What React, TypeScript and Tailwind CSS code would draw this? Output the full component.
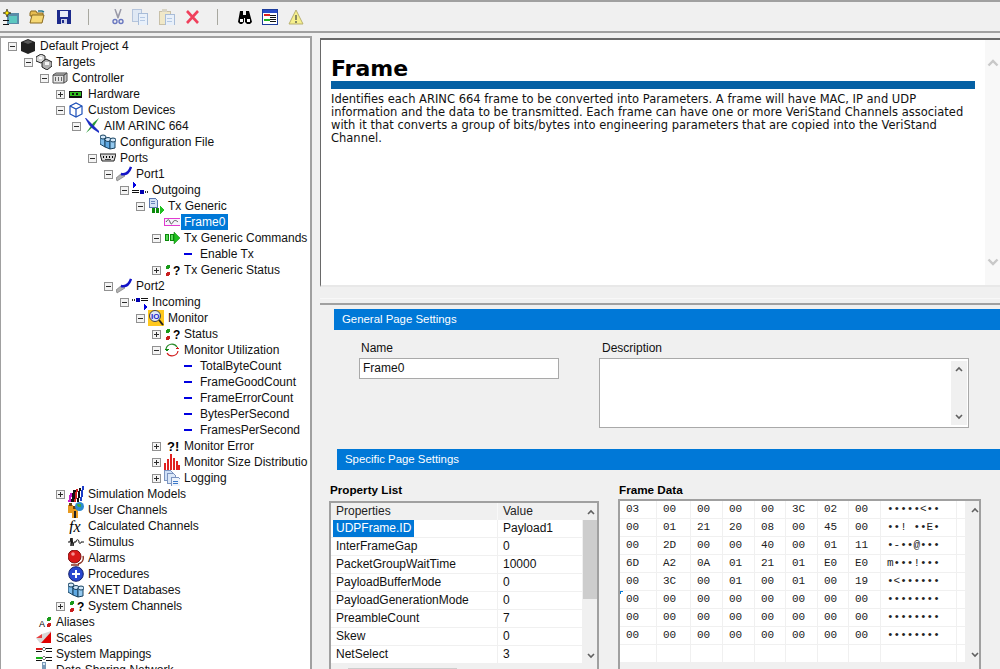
import React from "react";

const Svg = ({ children, size = 16 }: { children: React.ReactNode; size?: number }) => (
    <svg width={size} height={size} viewBox="0 0 16 16" className="shrink-0" shapeRendering="crispEdges">
        {children}
    </svg>
);

const Dash = () => (
    <Svg>
        <rect x="4" y="7" width="8" height="2" fill="#0000e0" />
    </Svg>
);

const Status = () => (
    <Svg>
        <rect x="2" y="3" width="4" height="4" rx="2" fill="#1a9a1a" />
        <rect x="2" y="10" width="4" height="4" rx="2" fill="#c81e1e" />
        <text x="9" y="13" fontSize="12" fontWeight="700" fontFamily="Liberation Sans" fill="#000">?</text>
    </Svg>
);

const Db = () => (
    <Svg>
        <g stroke="#16405f" shapeRendering="auto">
            <path d="M0 2v8l5 3V5z" fill="#7fbcea" />
            <ellipse cx="3" cy="3" rx="3" ry="2" fill="#d4e9fa" />
            <path d="M5 5v8l5 2V7z" fill="#5ea8e2" />
            <ellipse cx="8" cy="5.5" rx="3" ry="2" fill="#d4e9fa" />
            <path d="M10 6v9l5-1V6z" fill="#93c9f0" />
            <ellipse cx="13" cy="6" rx="3" ry="2" fill="#d4e9fa" />
        </g>
    </Svg>
);

const icons: Record<string, React.ReactNode> = {
    project: (
        <Svg>
            <path d="M1 4l7-3 7 3v9l-7 3-7-3z" fill="#222" shapeRendering="auto" />
            <path d="M3 4l5-2 5 2-5 2z" fill="#5c5c5c" shapeRendering="auto" />
        </Svg>
    ),
    targets: (
        <Svg>
            <g shapeRendering="auto" stroke="#222" fill="#d8d8d8">
                <path d="M0 3l5-3 4 2v4l-4 3-5-2z" />
                <path d="M6 8l4-3 6 3v4l-5 4-5-3z" fill="#b0b0b0" />
            </g>
            <rect x="3" y="3" width="3" height="2" fill="#fff" />
            <rect x="9" y="8" width="4" height="3" fill="#f4f4f4" />
        </Svg>
    ),
    controller: (
        <Svg>
            <path d="M1 5h11v8H1z" fill="#e4e4e4" stroke="#555" shapeRendering="auto" />
            <path d="M1 5l3-2h11l-3 2zM12 5l3-2v8l-3 2z" fill="#c8c8c8" stroke="#555" shapeRendering="auto" />
            <rect x="3" y="7" width="1" height="4" fill="#666" />
            <rect x="6" y="7" width="1" height="4" fill="#666" />
            <rect x="9" y="7" width="1" height="4" fill="#666" />
        </Svg>
    ),
    hardware: (
        <Svg>
            <rect x="1" y="5" width="13" height="7" fill="#111" />
            <rect x="2" y="6" width="11" height="4" fill="#30c020" />
            <rect x="4" y="7" width="2" height="2" fill="#111" />
            <rect x="8" y="7" width="2" height="2" fill="#111" />
        </Svg>
    ),
    custom: (
        <Svg>
            <g fill="#fff" stroke="#1c4fb8" shapeRendering="auto" strokeWidth="1.2">
                <path d="M2 4l6-3 6 3v8l-6 3-6-3z" />
                <path d="M2 4l6 3 6-3M8 7v8" fill="none" />
            </g>
        </Svg>
    ),
    aim: (
        <Svg>
            <g shapeRendering="auto">
                <path d="M15 0L9 5 2 15l8-7 5-8z" fill="#2a9a3a" />
                <path d="M1 0l1 0 5 5 3 3 5 5v2l-6-4-3-3-1-1z" fill="#1c2ec4" />
            </g>
        </Svg>
    ),
    ports: (
        <Svg>
            <path d="M0 4h16l-2 7H2z" fill="#d8d8d8" stroke="#222" shapeRendering="auto" />
            <rect x="3" y="6" width="1" height="2" fill="#000" />
            <rect x="6" y="6" width="1" height="2" fill="#000" />
            <rect x="9" y="6" width="1" height="2" fill="#000" />
            <rect x="12" y="6" width="1" height="2" fill="#000" />
            <rect x="5" y="9" width="6" height="1" fill="#444" />
        </Svg>
    ),
    port: (
        <Svg>
            <g shapeRendering="auto">
                <path d="M1 15l-1-3 6-5 3 3z" fill="#b0b0b0" stroke="#707070" strokeWidth=".6" />
                <path d="M5 8c4 1 8-1 10-7" fill="none" stroke="#1414c8" strokeWidth="2.4" />
            </g>
        </Svg>
    ),
    outgoing: (
        <Svg>
            <path d="M1 0l4 3-4 3z" fill="#0000e0" />
            <rect x="0" y="8" width="7" height="1" fill="#111" />
            <rect x="0" y="10" width="7" height="1" fill="#111" />
            <rect x="8" y="8" width="4" height="4" fill="#0000b0" />
            <rect x="13" y="9" width="1" height="2" fill="#333" />
            <rect x="15" y="9" width="1" height="2" fill="#333" />
        </Svg>
    ),
    incoming: (
        <Svg>
            <rect x="0" y="5" width="1" height="2" fill="#333" />
            <rect x="2" y="5" width="1" height="2" fill="#333" />
            <rect x="4" y="4" width="4" height="4" fill="#0000b0" />
            <rect x="9" y="4" width="7" height="1" fill="#111" />
            <rect x="9" y="6" width="7" height="1" fill="#111" />
            <path d="M12 10l3 3-3 3z" fill="#0000e0" />
        </Svg>
    ),
    txgeneric: (
        <Svg>
            <path d="M1 0h6l2 2v7H1z" fill="#d4e2f6" stroke="#5c78b0" strokeWidth="1" />
            <rect x="3" y="3" width="4" height="1" fill="#6a86bc" />
            <rect x="3" y="5" width="4" height="1" fill="#6a86bc" />
            <rect x="4" y="10" width="3" height="5" fill="#0a8a0a" />
            <rect x="8" y="10" width="3" height="5" fill="#0a8a0a" />
            <path d="M12 8l4 4-4 4z" fill="#1fc01f" />
        </Svg>
    ),
    frame: (
        <Svg>
            <rect x="0" y="4" width="16" height="7" fill="#f6f4fc" stroke="#e23ad0" />
            <path d="M2 8c2-3 3-3 4 0s2 2 3 0 3-2 5 0" fill="none" stroke="#555" shapeRendering="auto" />
        </Svg>
    ),
    commands: (
        <Svg>
            <rect x="1" y="4" width="4" height="7" fill="#0a8a0a" />
            <rect x="6" y="4" width="4" height="7" fill="#0a8a0a" />
            <rect x="2" y="5" width="2" height="5" fill="#5ada5a" />
            <rect x="7" y="5" width="2" height="5" fill="#5ada5a" />
            <path d="M10 2l6 6-6 6z" fill="#1fc01f" stroke="#0a7a0a" strokeWidth=".5" shapeRendering="auto" />
        </Svg>
    ),
    monitor: (
        <Svg>
            <rect x="0" y="0" width="16" height="16" rx="1" fill="#ffc81e" />
            <circle cx="7" cy="6" r="5.5" fill="#dfe8f8" stroke="#444" shapeRendering="auto" />
            <path d="M11 10l4 5" stroke="#222" strokeWidth="2" shapeRendering="auto" />
            <text x="3" y="9" fontSize="8" fontWeight="700" fontFamily="Liberation Sans" fill="#1c1cc8">IO</text>
        </Svg>
    ),
    util: (
        <Svg>
            <g fill="none" strokeWidth="1.2" shapeRendering="auto">
                <path d="M2 7a6 6 0 0 1 11-2" stroke="#2a8a2a" />
                <path d="M14 9a6 6 0 0 1-11 2" stroke="#d01818" />
            </g>
            <path d="M0 7h5l-2 2z" fill="#0a8a0a" />
            <path d="M11 7h5l-3-2z" fill="#d01818" />
        </Svg>
    ),
    error: (
        <Svg>
            <text x="3" y="13" fontSize="13" fontWeight="700" fontFamily="Liberation Sans" fill="#000">?!</text>
        </Svg>
    ),
    dist: (
        <Svg>
            <rect x="0" y="9" width="2" height="7" fill="#e02020" />
            <rect x="3" y="5" width="2" height="11" fill="#e02020" />
            <rect x="6" y="0" width="2" height="16" fill="#e02020" />
            <rect x="9" y="4" width="2" height="12" fill="#e02020" />
            <rect x="12" y="7" width="2" height="9" fill="#e02020" />
            <rect x="14" y="11" width="2" height="5" fill="#e02020" />
        </Svg>
    ),
    logging: (
        <Svg>
            <path d="M0 0h6l2 2v8H0z" fill="#cfe0f6" stroke="#7c94c0" />
            <path d="M3 3h6l2 2v8H3z" fill="#dbe8f8" stroke="#7c94c0" />
            <path d="M7 7h7l2 2v7H7z" fill="#eef4fc" stroke="#7c94c0" />
            <rect x="9" y="11" width="5" height="1" fill="#3a78c8" />
            <rect x="9" y="13" width="5" height="1" fill="#3a78c8" />
        </Svg>
    ),
    sim: (
        <Svg>
            <path d="M0 16l2-9h2l-1 9z" fill="#c81ec8" />
            <path d="M3 16l2-12h3l-2 12z" fill="#111" />
            <path d="M6 16l2-13h2l-2 13z" fill="#d02020" />
            <path d="M9 16l2-14h2l-2 14z" fill="#111" />
            <path d="M12 15l2-15h2l-2 15z" fill="#1c3cc8" />
        </Svg>
    ),
    user: (
        <Svg>
            <rect x="0" y="3" width="5" height="8" fill="#e89a20" />
            <rect x="4" y="6" width="6" height="10" fill="#e89a20" />
            <rect x="1" y="1" width="3" height="3" fill="#6a4010" />
            <rect x="5" y="4" width="3" height="3" fill="#6a4010" />
            <rect x="6" y="9" width="2" height="7" fill="#222" />
            <circle cx="11.5" cy="4.5" r="4.5" fill="#2a8ad0" shapeRendering="auto" />
            <path d="M9 2h4v3h-3z" fill="#3aa84a" />
        </Svg>
    ),
    fx: (
        <Svg>
            <text x="1" y="14" fontSize="16" fontStyle="italic" fontFamily="Liberation Serif" fill="#000">fx</text>
        </Svg>
    ),
    stimulus: (
        <Svg>
            <path d="M0 8h2l1-4v8l1-8 1 8 1-4h2c0-3 3-3 3 0 0 2 2 2 2 0h3" fill="none" stroke="#111" shapeRendering="auto" />
        </Svg>
    ),
    alarm: (
        <Svg>
            <circle cx="6.5" cy="6.5" r="6.5" fill="#d81818" stroke="#801010" shapeRendering="auto" />
            <circle cx="5" cy="4" r="1.8" fill="#f89090" shapeRendering="auto" />
            <path d="M3 15h8M10 14c4-1 6-4 5-8" fill="none" stroke="#8a3020" strokeWidth="1.4" shapeRendering="auto" />
        </Svg>
    ),
    procedures: (
        <Svg>
            <circle cx="8" cy="8" r="7.3" fill="#2a48d0" stroke="#12206a" shapeRendering="auto" />
            <rect x="7" y="4" width="2" height="8" fill="#fff" />
            <rect x="4" y="7" width="8" height="2" fill="#fff" />
        </Svg>
    ),
    aliases: (
        <Svg>
            <text x="3" y="13" fontSize="9" fontFamily="Liberation Sans" fill="#000">A</text>
            <rect x="11" y="3" width="4" height="4" rx="2" fill="#1a9a1a" />
            <rect x="11" y="9" width="4" height="4" rx="2" fill="#c81e1e" />
        </Svg>
    ),
    scales: (
        <Svg>
            <path d="M0 8l6-4v4z" fill="#e84040" shapeRendering="auto" />
            <path d="M0 8h6V4l9-3v12H4z" fill="#d8d8d8" shapeRendering="auto" />
            <path d="M5 13L15 2v11z" fill="#e00000" shapeRendering="auto" />
        </Svg>
    ),
    mappings: (
        <Svg>
            <rect x="0" y="2" width="6" height="2" fill="#e01818" />
            <rect x="0" y="5" width="6" height="1" fill="#111" />
            <rect x="0" y="11" width="6" height="2" fill="#18b018" />
            <rect x="0" y="14" width="6" height="1" fill="#111" />
            <path d="M8 1l2 2-2 2-2-2zM8 10l2 2-2 2-2-2z" fill="#fff" stroke="#333" strokeWidth=".7" shapeRendering="auto" />
            <rect x="10" y="2" width="6" height="1" fill="#111" />
            <rect x="10" y="5" width="6" height="1" fill="#111" />
            <rect x="10" y="11" width="6" height="1" fill="#111" />
            <rect x="10" y="14" width="6" height="1" fill="#111" />
        </Svg>
    ),
    network: (
        <Svg>
            <rect x="6" y="0" width="4" height="10" fill="#7a9ab8" />
            <rect x="7" y="1" width="2" height="2" fill="#d8e8f4" />
        </Svg>
    ),
    dash: <Dash />,
    status: <Status />,
    db: <Db />,
};

type Row = [number, string, string, ("+" | "-")?];

const rows: Row[] = [
    [0, "project", "Default Project 4", "-"],
    [1, "targets", "Targets", "-"],
    [2, "controller", "Controller", "-"],
    [3, "hardware", "Hardware", "+"],
    [3, "custom", "Custom Devices", "-"],
    [4, "aim", "AIM ARINC 664", "-"],
    [5, "db", "Configuration File"],
    [5, "ports", "Ports", "-"],
    [6, "port", "Port1", "-"],
    [7, "outgoing", "Outgoing", "-"],
    [8, "txgeneric", "Tx Generic", "-"],
    [9, "frame", "Frame0"],
    [9, "commands", "Tx Generic Commands", "-"],
    [10, "dash", "Enable Tx"],
    [9, "status", "Tx Generic Status", "+"],
    [6, "port", "Port2", "-"],
    [7, "incoming", "Incoming", "-"],
    [8, "monitor", "Monitor", "-"],
    [9, "status", "Status", "+"],
    [9, "util", "Monitor Utilization", "-"],
    [10, "dash", "TotalByteCount"],
    [10, "dash", "FrameGoodCount"],
    [10, "dash", "FrameErrorCount"],
    [10, "dash", "BytesPerSecond"],
    [10, "dash", "FramesPerSecond"],
    [9, "error", "Monitor Error", "+"],
    [9, "dist", "Monitor Size Distribution", "+"],
    [9, "logging", "Logging", "+"],
    [3, "sim", "Simulation Models", "+"],
    [3, "user", "User Channels"],
    [3, "fx", "Calculated Channels"],
    [3, "stimulus", "Stimulus"],
    [3, "alarm", "Alarms"],
    [3, "procedures", "Procedures"],
    [3, "db", "XNET Databases"],
    [3, "status", "System Channels", "+"],
    [1, "aliases", "Aliases"],
    [1, "scales", "Scales"],
    [1, "mappings", "System Mappings"],
    [1, "network", "Data Sharing Network"],
];

const props = [
    ["UDPFrame.ID", "Payload1"],
    ["InterFrameGap", "0"],
    ["PacketGroupWaitTime", "10000"],
    ["PayloadBufferMode", "0"],
    ["PayloadGenerationMode", "0"],
    ["PreambleCount", "7"],
    ["Skew", "0"],
    ["NetSelect", "3"],
];

const frameData = [
    ["03", "00", "00", "00", "00", "3C", "02", "00", "•••••<••"],
    ["00", "01", "21", "20", "08", "00", "45", "00", "••! ••E•"],
    ["00", "2D", "00", "00", "40", "00", "01", "11", "•-••@•••"],
    ["6D", "A2", "0A", "01", "21", "01", "E0", "E0", "m•••!•••"],
    ["00", "3C", "00", "01", "00", "01", "00", "19", "•<••••••"],
    ["00", "00", "00", "00", "00", "00", "00", "00", "••••••••"],
    ["00", "00", "00", "00", "00", "00", "00", "00", "••••••••"],
    ["00", "00", "00", "00", "00", "00", "00", "00", "••••••••"],
    ["", "", "", "", "", "", "", "", ""],
];

function Expander({ kind }: { kind?: "+" | "-" }) {
    if (!kind) return <span className="w-[9px] h-[9px] shrink-0" />;
    return (
        <span className="relative w-[9px] h-[9px] shrink-0 border border-[#919191] bg-[#f4f4f4]">
            <span className="absolute left-[1px] top-[3px] w-[5px] h-[1px] bg-[#2b2b2b]" />
            {kind === "+" && <span className="absolute left-[3px] top-[1px] w-[1px] h-[5px] bg-[#2b2b2b]" />}
        </span>
    );
}

function Chevron({ up, color = "#606060", size = 8 }: { up?: boolean; color?: string; size?: number }) {
    return (
        <svg width={size} height={(size * 3) / 4} viewBox="0 0 8 6" className="shrink-0">
            <path d={up ? "M1 5l3-3 3 3" : "M1 1l3 3 3-3"} fill="none" stroke={color} strokeWidth="1.6" />
        </svg>
    );
}

function Toolbar() {
    return (
        <div className="h-[33px] shrink-0 border-t-2 border-b-2 border-[#a0a0a0] flex items-center">
            <span className="ml-[3px] w-4 h-4">
                <Svg>
                    <rect x="4" y="4" width="12" height="11" fill="#5a8ca8" />
                    <rect x="6" y="7" width="8" height="7" fill="#5cc8c0" />
                    <path d="M4 0l1 3 3 1-3 1-1 3-1-3-3-1 3-1z" fill="#ffe800" stroke="#111" strokeWidth=".6" shapeRendering="auto" />
                    <path d="M0 11h6M0 15h6" stroke="#111" />
                </Svg>
            </span>
            <span className="ml-[10px] w-4 h-4">
                <Svg>
                    <path d="M1 4l1-2h5l1 2h6v3H1z" fill="#e6bc50" stroke="#8a6a20" shapeRendering="auto" />
                    <path d="M1 14l2-8h12l-2 8z" fill="#f6d874" stroke="#8a6a20" shapeRendering="auto" />
                    <path d="M9 2h4l2 1" fill="none" stroke="#2a7a90" strokeWidth="1.5" shapeRendering="auto" />
                </Svg>
            </span>
            <span className="ml-[11px] w-4 h-4">
                <Svg>
                    <rect x="1" y="1" width="14" height="14" fill="#1c2a8c" />
                    <rect x="4" y="2" width="8" height="6" fill="#e8ecf8" />
                    <rect x="5" y="10" width="6" height="5" fill="#d0d4e8" />
                    <rect x="6" y="11" width="2" height="3" fill="#1c2a8c" />
                </Svg>
            </span>
            <span className="ml-[16px] w-[1px] h-[16px] bg-[#a8a8a0]" />
            <span className="ml-[21px] w-4 h-4">
                <Svg>
                    <path d="M5 0l3 8 3-8M11 0L8 9M5 0l3 9" fill="none" stroke="#9a9aa8" strokeWidth="1.4" shapeRendering="auto" />
                    <circle cx="5" cy="12.5" r="2" fill="none" stroke="#6a78c0" strokeWidth="1.4" shapeRendering="auto" />
                    <circle cx="11" cy="12.5" r="2" fill="none" stroke="#6a78c0" strokeWidth="1.4" shapeRendering="auto" />
                </Svg>
            </span>
            <span className="ml-[6px] w-4 h-4">
                <Svg>
                    <rect x="0" y="0" width="9" height="12" fill="#dfe8f4" stroke="#b4c4dc" />
                    <rect x="6" y="4" width="9" height="12" fill="#e8f0fa" stroke="#a8bcd8" />
                    <rect x="8" y="8" width="5" height="1" fill="#b4c8e4" />
                    <rect x="8" y="11" width="5" height="1" fill="#b4c8e4" />
                </Svg>
            </span>
            <span className="ml-[11px] w-4 h-4">
                <Svg>
                    <rect x="0" y="2" width="11" height="13" fill="#f0e8c8" stroke="#c8c0a8" />
                    <rect x="3" y="0" width="5" height="3" fill="#d8d4c4" />
                    <rect x="6" y="5" width="9" height="11" fill="#e8f0fa" stroke="#a8bcd8" />
                    <rect x="8" y="9" width="5" height="1" fill="#b4c8e4" />
                    <rect x="8" y="12" width="5" height="1" fill="#b4c8e4" />
                </Svg>
            </span>
            <span className="ml-[10px] w-4 h-4">
                <Svg>
                    <path d="M2 2l11 12M13 2L2 14" stroke="#f0405c" strokeWidth="2.6" shapeRendering="auto" />
                </Svg>
            </span>
            <span className="ml-[16px] w-[1px] h-[16px] bg-[#a8a8a0]" />
            <span className="ml-[19px] w-4 h-4">
                <Svg>
                    <path d="M3 2h3v4h3V2h3l3 11-2 2h-3l-2-2V9h-1v4l-2 2H3l-2-2z" fill="#000" shapeRendering="auto" />
                    <rect x="3" y="10" width="3" height="3" fill="#fff" />
                    <rect x="10" y="10" width="3" height="3" fill="#fff" />
                </Svg>
            </span>
            <span className="ml-[9px] w-4 h-4">
                <Svg>
                    <rect x="0" y="0" width="15" height="15" fill="#fff" stroke="#1c3c9c" />
                    <rect x="1" y="1" width="14" height="3" fill="#2a4cc8" />
                    <rect x="2" y="5" width="6" height="2" fill="#e02020" />
                    <rect x="2" y="10" width="6" height="2" fill="#20b020" />
                    <path d="M8 6h6M8 8h6M8 10h6M8 12h6" stroke="#111" />
                </Svg>
            </span>
            <span className="ml-[10px] w-4 h-4">
                <Svg>
                    <path d="M8 1l7 14H1z" fill="#f6f08c" stroke="#b8b070" shapeRendering="auto" />
                    <rect x="7" y="6" width="2" height="5" fill="#8a8a60" />
                    <rect x="7" y="12" width="2" height="2" fill="#8a8a60" />
                </Svg>
            </span>
        </div>
    );
}

function Tree() {
    return (
        <div className="w-[312px] h-full shrink-0 overflow-hidden bg-white border-t-2 border-l border-r-2 border-[#a0a0a0]">
            {rows.map(([level, icon, label, kind]) => (
                <div
                    key={label + level}
                    className="h-4 w-[307px] overflow-hidden flex items-center whitespace-nowrap"
                    style={{ paddingLeft: 7 + 16 * level }}
                >
                    <Expander kind={kind} />
                    <span className="ml-[3px] mr-[1px]">{icons[icon]}</span>
                    <span
                        className={
                            label === "Frame0"
                                ? "px-[3px] h-4 leading-4 bg-[#0078d7] text-white"
                                : "px-[3px] h-4 leading-4 text-[#111]"
                        }
                    >
                        {label}
                    </span>
                </div>
            ))}
        </div>
    );
}

function SectionHeader({ title, className }: { title: string; className: string }) {
    return (
        <div className={"h-[21px] bg-[#0078d7] text-white text-[11.4px] flex items-center pl-[8px] shrink-0 " + className}>
            {title}
        </div>
    );
}

function PropertyList() {
    return (
        <div className="w-[270px] ml-[9px] shrink-0">
            <div className="h-[14px] leading-[14px] font-bold ml-[1px] mt-[13px] text-[11.7px] text-black">Property List</div>
            <div className="mt-[4px] h-[200px] border-2 border-[#a0a0a0] bg-[#f0f0f0] flex overflow-hidden">
                <div className="w-[251px] shrink-0">
                    <div className="h-[17px] flex text-[#222] leading-[17px]">
                        <div className="w-[167px] pl-[5px] border-r border-[#f8f8f8]">Properties</div>
                        <div className="pl-[5px]">Value</div>
                    </div>
                    {props.map(([name, value], i) => (
                        <div key={name} className="h-[18px] flex bg-white border-b border-[#f0f0f0] leading-[17px] text-[#111]">
                            <div className="w-[167px] border-r border-[#f0f0f0] pl-[2px]">
                                <span className={i === 0 ? "inline-block px-[3px] bg-[#0078d7] text-white" : "inline-block px-[3px]"}>
                                    {name}
                                </span>
                            </div>
                            <div className="pl-[5px]">{value}</div>
                        </div>
                    ))}
                    <div className="mt-[4px] h-[8px] bg-[#f0f0f0] pl-[17px]">
                        <div className="w-[109px] h-full bg-[#cdcdcd]" />
                    </div>
                </div>
                <div className="w-[15px] shrink-0 flex flex-col items-center ml-[1px]">
                    <div className="h-[17px] flex items-center">
                        <Chevron up />
                    </div>
                    <div className="w-full h-[79px] bg-[#cdcdcd]" />
                    <div className="h-[54px]" />
                    <Chevron />
                </div>
            </div>
        </div>
    );
}

function FrameData() {
    return (
        <div className="w-[363px] ml-[19px] shrink-0">
            <div className="h-[14px] leading-[14px] font-bold ml-[1px] mt-[13px] text-[11.7px] text-black">Frame Data</div>
            <div className="relative mt-[2px] h-[200px] border-2 border-[#a0a0a0] bg-[#f0f0f0] flex overflow-hidden">
                <div className="w-[345px] shrink-0">
                    <div className="grid grid-cols-[37px_34px_32px_32px_31px_32px_31px_32px_76px_8px] bg-white font-['Liberation_Mono',monospace] text-[11px] text-[#222]">
                        {frameData.flatMap((row, r) =>
                            [...row, ""].map((cell, c) => (
                                <div
                                    key={r + "-" + c}
                                    className={
                                        (c === 9 ? "border-b " : "border-r border-b ") +
                                        "border-[#f0f0f0] h-[18px] leading-[17px] whitespace-pre pl-[6px]"
                                    }
                                >
                                    {cell}
                                </div>
                            ))
                        )}
                    </div>
                </div>
                <div className="w-[15px] shrink-0 ml-[2px] flex flex-col items-center bg-[#f0f0f0]">
                    <div className="h-[18px] flex items-center">
                        <Chevron up />
                    </div>
                    <div className="h-[133px]" />
                    <Chevron />
                </div>
                {/* little blue corner the original paints on row 6 */}
                <span className="absolute left-[0px] top-[90px] w-[3px] h-[3px] border-l border-t border-[#0078d7]" />
            </div>
        </div>
    );
}

function RightSide() {
    return (
        <div className="flex-1 min-w-0 ml-[8px] flex flex-col">
            <div className="mt-[2px] h-[249px] shrink-0 bg-white border-t-2 border-l border-b-2 border-t-[#696969] border-l-[#696969] border-b-[#e8e8e8] flex">
                <div className="flex-1 min-w-0 pl-[10px] pr-[10px] pt-[17px] font-['DejaVu_Sans',sans-serif] text-[11.5px] leading-[13px] text-[#111] whitespace-nowrap">
                    <div className="text-[22px] leading-[24px] font-bold text-black">Frame</div>
                    <div className="h-[8px] bg-[#0560a4]" />
                    <p className="mt-[4px]">
                        Identifies each ARINC 664 frame to be converted into Parameters. A frame will have MAC, IP and UDP
                        <br />
                        information and the data to be transmitted. Each frame can have one or more VeriStand Channels associated
                        <br />
                        with it that converts a group of bits/bytes into engineering parameters that are copied into the VeriStand
                        <br />
                        Channel.
                    </p>
                </div>
                <div className="w-[15px] shrink-0 bg-[#f8f8f8] flex flex-col items-center justify-between py-[18px]">
                    <Chevron up color="#c8c8c8" size={12} />
                    <Chevron color="#c8c8c8" size={12} />
                </div>
            </div>
            <div className="h-[12px] shrink-0 border-b border-[#f8f8f8]" />
            <div className="h-[6px] shrink-0 border-b-2 border-[#a0a0a0]" />
            <SectionHeader title="General Page Settings" className="ml-[14px] mt-[4px]" />
            <div className="flex mt-[11px] h-[86px] shrink-0">
                <div className="ml-[39px] w-[200px] shrink-0">
                    <div className="h-[14px] leading-[14px] pl-[2px] text-[#111]">Name</div>
                    <div className="mt-[3px] h-[21px] bg-white border border-[#a9a9a9] pl-[3px] leading-[19px] text-[#111]">Frame0</div>
                </div>
                <div className="ml-[40px] w-[370px] shrink-0">
                    <div className="h-[14px] leading-[14px] pl-[3px] text-[#111]">Description</div>
                    <div className="mt-[3px] h-[70px] bg-white border border-[#a9a9a9] flex justify-end">
                        <div className="w-[16px] mr-[1px] my-[2px] bg-[#f0f0f0] flex flex-col items-center justify-between py-[5px]">
                            <Chevron up />
                            <Chevron />
                        </div>
                    </div>
                </div>
            </div>
            <SectionHeader title="Specific Page Settings" className="ml-[17px] mt-[22px]" />
            <div className="flex">
                <PropertyList />
                <FrameData />
            </div>
        </div>
    );
}

export default function App() {
    return (
        <div className="w-[1000px] h-[669px] overflow-hidden bg-[#f0f0f0] flex flex-col font-['Liberation_Sans',sans-serif] text-[12px]">
            <Toolbar />
            <div className="flex-1 min-h-0 flex mt-[3px]">
                <Tree />
                <RightSide />
            </div>
        </div>
    );
}
